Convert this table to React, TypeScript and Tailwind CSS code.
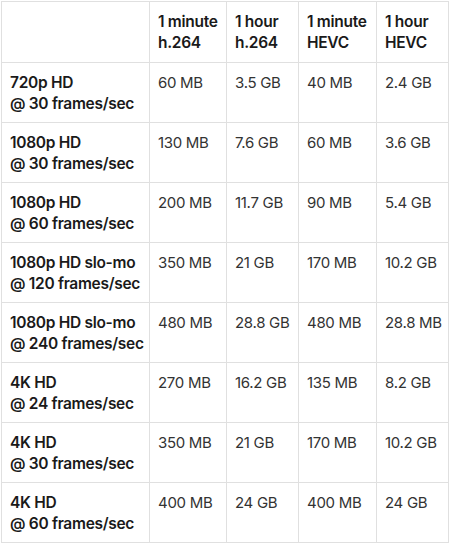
const headers = [
  ['1 minute', 'h.264'],
  ['1 hour', 'h.264'],
  ['1 minute', 'HEVC'],
  ['1 hour', 'HEVC'],
];

const rows: { label: [string, string]; values: string[] }[] = [
  { label: ['720p HD', '@ 30 frames/sec'], values: ['60 MB', '3.5 GB', '40 MB', '2.4 GB'] },
  { label: ['1080p HD', '@ 30 frames/sec'], values: ['130 MB', '7.6 GB', '60 MB', '3.6 GB'] },
  { label: ['1080p HD', '@ 60 frames/sec'], values: ['200 MB', '11.7 GB', '90 MB', '5.4 GB'] },
  { label: ['1080p HD slo-mo', '@ 120 frames/sec'], values: ['350 MB', '21 GB', '170 MB', '10.2 GB'] },
  { label: ['1080p HD slo-mo', '@ 240 frames/sec'], values: ['480 MB', '28.8 GB', '480 MB', '28.8 MB'] },
  { label: ['4K HD', '@ 24 frames/sec'], values: ['270 MB', '16.2 GB', '135 MB', '8.2 GB'] },
  { label: ['4K HD', '@ 30 frames/sec'], values: ['350 MB', '21 GB', '170 MB', '10.2 GB'] },
  { label: ['4K HD', '@ 60 frames/sec'], values: ['400 MB', '24 GB', '400 MB', '24 GB'] },
];

const colWidths = ['w-[148px]', 'w-[77px]', 'w-[72px]', 'w-[78px]', 'w-[72px]'];

export default function App() {
  return (
    <div className="min-h-[546px] bg-white pl-px pt-px font-['Inter','Liberation_Sans',sans-serif]">
      <table className="table-fixed border-collapse w-[447px]">
        <colgroup>
          {colWidths.map((w, i) => (
            <col key={i} className={w} />
          ))}
        </colgroup>
        <thead>
          <tr className="h-[61px]">
            <th className="border border-[#e0e0e0]" />
            {headers.map(([a, b], i) => (
              <th
                key={i}
                className="border border-[#e0e0e0] px-2 pt-[9px] align-top text-left text-[15.5px] leading-[21px] font-semibold text-[#1a1a1a] tracking-[-0.3px] whitespace-nowrap"
              >
                <div>{a}</div>
                <div>{b}</div>
              </th>
            ))}
          </tr>
        </thead>
        <tbody>
          {rows.map((r, i) => (
            <tr key={i} className="h-[60px]">
              <td className="border border-[#e0e0e0] px-2 pt-[9px] align-top text-[15.5px] leading-[21px] font-semibold text-[#1a1a1a] tracking-[-0.3px] whitespace-nowrap">
                <div>{r.label[0]}</div>
                <div>{r.label[1]}</div>
              </td>
              {r.values.map((v, j) => (
                <td
                  key={j}
                  className="border border-[#e0e0e0] px-2 pt-[9px] align-top text-[15px] leading-[21px] text-[#333] tracking-[-0.3px] whitespace-nowrap"
                >
                  {v}
                </td>
              ))}
            </tr>
          ))}
        </tbody>
      </table>
    </div>
  );
}
